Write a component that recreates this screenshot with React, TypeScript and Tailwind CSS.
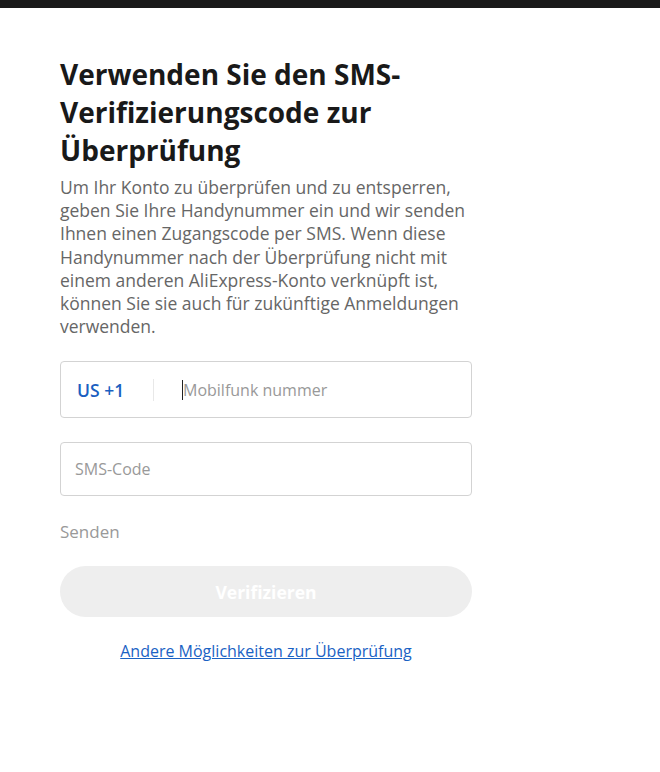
export default function App() {
  return (
    <div className="min-h-[772px] bg-white" style={{ fontFamily: '"Open Sans", sans-serif' }}>
      <div className="h-2 bg-[#1a1a1a]" />
      <div className="w-[412px] ml-[60px] pt-[47px]">
        <h1 className="text-[28px] leading-[38px] font-bold text-[#191919]">
          Verwenden Sie den SMS-Verifizierungscode zur Überprüfung
        </h1>
        <p className="mt-[7px] text-[17.5px] leading-[23.2px] text-[#666]">
          Um Ihr Konto zu überprüfen und zu entsperren, geben Sie Ihre Handynummer ein und wir senden Ihnen einen
          Zugangscode per SMS. Wenn diese Handynummer nach der Überprüfung nicht mit einem anderen AliExpress-Konto
          verknüpft ist, können Sie sie auch für zukünftige Anmeldungen verwenden.
        </p>
        <div className="mt-[23px] h-[57px] border border-[#d3d3d3] rounded-[4px] flex items-center">
          <span className="pl-[16px] w-[92px] text-[17.5px] font-semibold text-[#1b5fc1]">US +1</span>
          <span className="h-[22px] w-px bg-[#e8e8e8]" />
          <span className="ml-[28px] h-[20px] w-px bg-[#222]" />
          <span className="text-[16px] text-[#999]">Mobilfunk nummer</span>
        </div>
        <div className="mt-[24px] h-[54px] border border-[#d3d3d3] rounded-[4px] flex items-center pl-[14px]">
          <span className="text-[16px] text-[#999]">SMS-Code</span>
        </div>
        <div className="mt-[24px] text-[17px] text-[#999] leading-[24px]">Senden</div>
        <button className="mt-[22px] w-full h-[51px] rounded-full bg-[#eeeeee] text-white text-[17.5px] font-bold">
          Verifizieren
        </button>
        <div className="mt-[22px] text-center">
          <a className="text-[16px] text-[#1a62c4] underline">Andere Möglichkeiten zur Überprüfung</a>
        </div>
      </div>
    </div>
  );
}
